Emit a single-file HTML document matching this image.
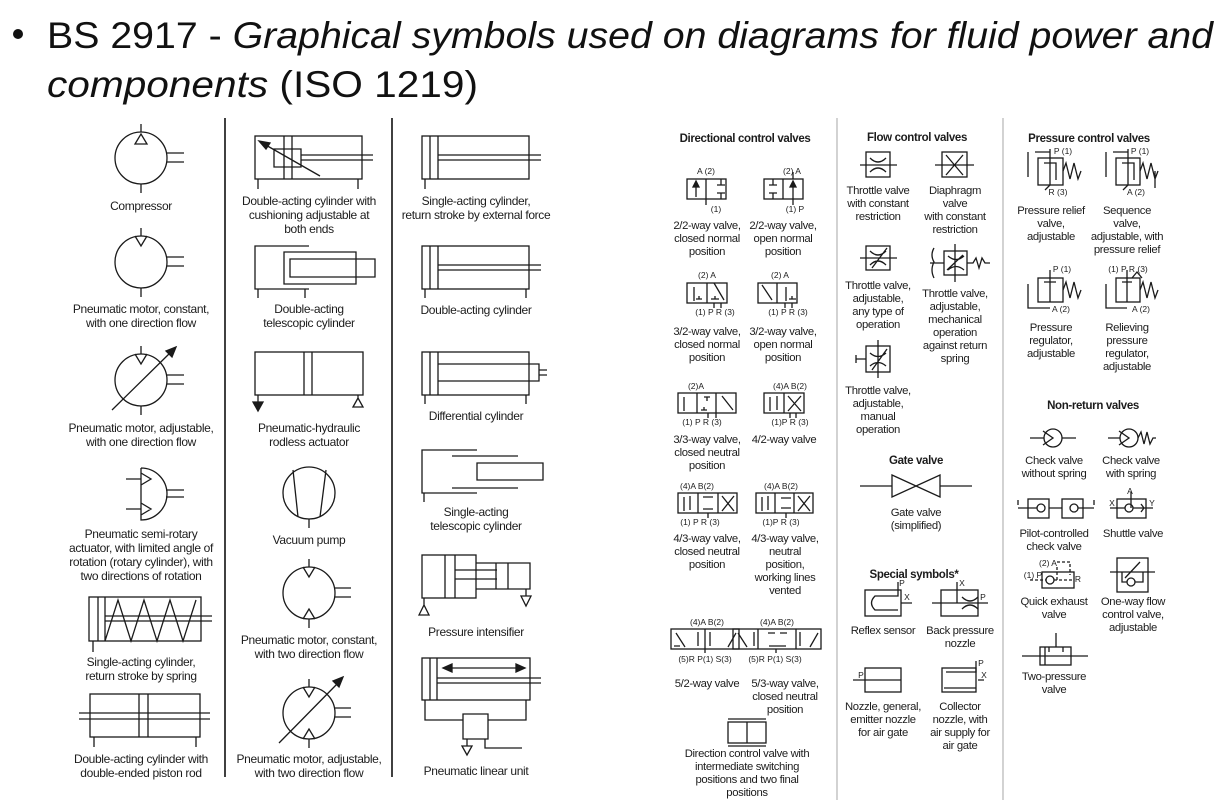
<!DOCTYPE html>
<html><head><meta charset="utf-8"><style>
html,body{margin:0;padding:0;background:#fff;}
svg{display:block}
.t{font-family:"Liberation Sans",Arial,sans-serif;font-size:12px;fill:#1c1c1c;text-anchor:middle;letter-spacing:-0.35px}
.b{font-weight:bold;font-size:11.5px}
.s{font-family:"Liberation Sans",Arial,sans-serif;font-size:8.5px;fill:#1c1c1c;text-anchor:middle}
.ti{font-family:"Liberation Sans",Arial,sans-serif;font-size:37px;fill:#111}
g.k *{fill:none;stroke:#1a1a1a;stroke-width:1.3}
g.k .f{fill:#1a1a1a}
</style></head><body>
<svg width="1227" height="804" viewBox="0 0 1227 804" xmlns="http://www.w3.org/2000/svg">
<circle cx="18" cy="34" r="5" fill="#111"/>
<text class="ti" x="47" y="48" textLength="1166" lengthAdjust="spacingAndGlyphs">BS 2917 - <tspan font-style="italic">Graphical symbols used on diagrams for fluid power and</tspan></text>
<text class="ti" x="47" y="97" textLength="431" lengthAdjust="spacingAndGlyphs"><tspan font-style="italic">components</tspan>  (ISO  1219)</text>

<!-- dividers -->
<line x1="225" y1="118" x2="225" y2="777" stroke="#111" stroke-width="1.6"/>
<line x1="392" y1="118" x2="392" y2="777" stroke="#111" stroke-width="1.6"/>
<line x1="837" y1="118" x2="837" y2="800" stroke="#bbb" stroke-width="1.3"/>
<line x1="1003" y1="118" x2="1003" y2="800" stroke="#bbb" stroke-width="1.3"/>

<g class="k">
<!-- col1 -->
<circle cx="141" cy="158" r="26"/><path d="M141 124V132M141 184V193M167 153H184M167 162H184M135 144L141 134L147 144Z"/>
<circle cx="141" cy="262" r="26"/><path d="M141 228V236M141 288V297M167 257H184M167 266H184M135 236L141 246L147 236"/>
<circle cx="141" cy="380" r="26"/><path d="M141 346V354M141 406V415M167 375H184M167 384H184M135 354L141 364L147 354M112 410L172 351"/><path class="f" d="M176 347L166 351L172 357Z"/>
<path d="M141 468V520A26 26 0 0 0 141 468M126 479H141M126 509H141M141 473L151 479L141 485M141 503L151 509L141 515M166 490H184M166 497H184"/>
<rect x="89" y="597" width="112" height="44"/><path d="M98 597V641M105 597V641M105 616H212M105 621H212M93 641V652M105 641L118 600L131 641L144 600L157 641L170 600L183 641L196 600"/>
<rect x="90" y="694" width="110" height="43"/><path d="M139 694V737M148 694V737M79 713H210M79 719H210M94 737V747M196 737V747"/>
<!-- col2 -->
<rect x="255" y="136" width="107" height="43"/><path d="M284 136V179M292 136V179M274 149H301V167H274ZM301 155H373M301 160H373M258 179V189M358 179V189M320 176L264 144"/><path class="f" d="M259 141L270 143L266 149Z"/>
<path d="M309 246H255V289H309M284 252H356V284H284ZM290 259H375V277H290ZM258 289V298M305 289V298"/>
<rect x="255" y="352" width="108" height="43"/><path d="M304 352V395M312 352V395M258 395V402M358 395V398M353 407L358 398L363 407Z"/><path class="f" d="M253 402H263L258 411Z"/>
<circle cx="309" cy="493" r="26"/><path d="M293 470L298 517M326 470L320 517M309 519V528"/>
<circle cx="309" cy="593" r="26"/><path d="M309 559V567M309 619V628M335 588H351M335 597H351M303 567L309 577L315 567M303 619L309 609L315 619"/>
<circle cx="309" cy="713" r="26"/><path d="M309 679V687M309 739V748M335 708H351M335 717H351M303 687L309 697L315 687M303 739L309 729L315 739M279 743L338 683"/><path class="f" d="M343 677L333 681L339 687Z"/>
<!-- col3 -->
<rect x="422" y="136" width="107" height="43"/><path d="M430 136V179M438 136V179M438 155H541M438 160H541M425 179V189"/>
<rect x="422" y="246" width="107" height="43"/><path d="M430 246V289M438 246V289M438 265H541M438 270H541M425 289V298M526 289V298"/>
<rect x="422" y="352" width="107" height="43"/><path d="M430 352V395M438 352V395M438 364H539V381H438M539 370H547M539 375H547M425 395V404M526 395V404"/>
<path d="M477 450H422V493H477M452 456H518M452 488H518M477 463H543V480H477ZM424 493V502"/>
<rect x="422" y="555" width="54" height="43"/><path d="M445 555V598M455 555V598M455 570H497M455 579H497M476 563H530V589H476M496 563V589M508 563V589M424 598V605M419 615L424 605L429 615ZM526 589V596M521 596H531L526 606Z"/>
<rect x="422" y="658" width="108" height="42"/><path d="M430 658V700M437 658V700M437 678H541M437 683H541M450 668H518M425 700V720H463M526 700V720H488M463 714H488V739H463ZM467 739V746M462 746H472L467 755ZM485 739V748H522"/><path class="f" d="M443 668L452 664V672ZM525 668L516 664V672Z"/>

<!-- directional valves -->
<rect x="687" y="179" width="39" height="20"/><path d="M706 179V199M696 197V183M721 179V185M717 185H725M721 199V193M717 193H725M706 199V205"/><path class="f" d="M696 181L693 187H699Z"/>
<rect x="764" y="179" width="39" height="20"/><path d="M783 179V199M793 199V183M773 179V185M769 185H777M773 199V193M769 193H777M793 199V205M793 179V172"/><path class="f" d="M793 181L790 187H796Z"/>
<rect x="687" y="283" width="40" height="20"/><path d="M707 283V303M694 301V287M714 283L724 300M696 299H702M699 299V296M711 299H719M715 299V296M714 303V308M721 303V308"/>
<rect x="758" y="283" width="39" height="20"/><path d="M777 283V303M762 285L772 300M786 301V287M792 299V296M789 299H796M785 303V308M792 303V308"/>
<rect x="678" y="393" width="58" height="20"/><path d="M697 393V413M716 393V413M684 411V397M704 397H710M707 397V401M701 410H707M704 410V407M722 396L733 410M708 413V418M716 413V418"/>
<rect x="764" y="393" width="40" height="20"/><path d="M784 393V413M770 411V397M777 396V410M788 396L801 411M801 396L788 411M790 413V418M796 413V418"/>
<rect x="678" y="493" width="59" height="20"/><path d="M698 493V513M718 493V513M684 511V497M690 496V510M703 497H713M703 509H713M722 496L734 511M734 496L722 511M708 513V518"/>
<rect x="756" y="493" width="57" height="20"/><path d="M775 493V513M794 493V513M762 511V497M768 496V510M781 498H791M781 508H791M798 496L810 511M810 496L798 511M786 513V518"/>
<rect x="671" y="629" width="68" height="20"/><path d="M705 629V649M676 633L685 647M698 632V646M710 632V646M728 647L736 633M674 646H680M705 649V653"/>
<rect x="733" y="629" width="88" height="20"/><path d="M758 629V649M796 629V649M738 633L747 647M754 632V646M768 633H775M780 633H787M769 646H786M800 632V646M810 647L818 633M776 649V653"/>
<rect x="728" y="722" width="38" height="21"/><path d="M747 722V743M728 719H766M728 746H766"/>

<!-- flow -->
<rect x="866" y="152" width="24" height="25"/><path d="M860 165H897M870 158Q878 166 886 158M870 172Q878 164 886 172"/>
<rect x="942" y="152" width="25" height="25"/><path d="M935 165H974M946 155L963 175M963 155L946 175"/>
<rect x="866" y="246" width="24" height="24"/><path d="M860 258H897M870 251Q878 259 886 251M870 265Q878 257 886 265M872 268L887 248"/>
<rect x="944" y="251" width="23" height="24"/><path d="M930 263H944M955 244V282M967 263H973L976 258L979 268L982 258L985 263H990M947 270L963 255M948 256Q956 263 964 256M948 270Q956 263 964 270M934 248Q930 255 934 262Q930 270 934 278"/>
<rect x="866" y="346" width="24" height="26"/><path d="M878 340V378M856 359H866M856 355V363M870 353Q878 360 886 353M870 366Q878 359 886 366M872 370L887 349"/>
<path d="M860 486H892M940 486H972M892 475L940 497V475L892 497Z"/>
<!-- special -->
<rect x="865" y="590" width="36" height="26"/><path d="M898 582V596H875Q868 603 875 610H898M901 603H912"/>
<rect x="941" y="590" width="37" height="26"/><path d="M957 582V603M932 603H988M962 597Q970 605 978 597M962 609Q970 601 978 609"/>
<rect x="865" y="668" width="36" height="24"/><path d="M853 680H901"/>
<rect x="942" y="668" width="34" height="24"/><path d="M976 661V672H946M944 688H976M978 680H984"/>

<!-- pressure -->
<rect x="1038" y="158" width="25" height="27"/><path d="M1050 149V185M1044 163H1056V180M1035 152H1050M1028 152V177M1050 185L1045 190M1063 171L1066 163L1070 179L1074 163L1078 179L1081 171"/>
<rect x="1116" y="158" width="24" height="27"/><path d="M1128 149V185M1122 163H1134V180M1113 152H1128M1106 152V177M1128 185L1123 190M1140 171L1143 163L1147 179L1151 163L1155 179L1158 171M1155 171V188"/>
<rect x="1038" y="278" width="25" height="24"/><path d="M1050 270V302M1044 282H1056M1050 282V298M1028 284V308H1050M1063 290L1066 282L1070 298L1074 282L1078 298L1081 290"/>
<rect x="1116" y="278" width="24" height="24"/><path d="M1127 270V302M1122 282H1132M1127 282V298M1106 284V308H1127M1140 290L1143 282L1147 298L1151 282L1155 298L1158 290M1132 278L1137 272L1142 278"/>
<!-- non-return -->
<circle cx="1053" cy="438" r="9"/><path d="M1030 438H1044M1062 438H1076M1043 431L1053 438L1043 445"/>
<circle cx="1129" cy="438" r="9"/><path d="M1108 438H1120M1119 431L1129 438L1119 445M1138 438L1141 432L1144 444L1147 432L1150 444L1153 438H1156"/>
<rect x="1028" y="499" width="21" height="19"/><rect x="1062" y="499" width="21" height="19"/><circle cx="1041" cy="508" r="4"/><circle cx="1074" cy="508" r="4"/><path d="M1018 508H1037M1049 508H1062M1078 508H1094M1018 500V505M1094 500V505"/>
<rect x="1117" y="499" width="29" height="19"/><circle cx="1129" cy="508" r="4"/><path d="M1110 508H1125M1133 508H1153M1131 492V508M1141 504L1144 508L1141 512"/>
<rect x="1042" y="572" width="32" height="16"/><circle cx="1050" cy="580" r="4"/><path d="M1030 580H1046M1054 580H1072M1057 567V580M1057 562H1070V575" stroke-dasharray="3 2"/>
<rect x="1117" y="558" width="31" height="34"/><circle cx="1131" cy="582" r="4"/><path d="M1110 572H1155M1122 572V582H1127M1143 572V582H1135M1125 578L1140 562"/>
<rect x="1040" y="647" width="31" height="18"/><path d="M1022 656H1088M1056 633V647M1045 647V665M1049 647V652M1063 647V652"/>
</g>

<!-- left labels -->
<g class="t">
<text x="141" y="210">Compressor</text>
<text x="141" y="313">Pneumatic motor, constant,<tspan x="141" dy="14">with one direction flow</tspan></text>
<text x="141" y="432">Pneumatic motor, adjustable,<tspan x="141" dy="14">with one direction flow</tspan></text>
<text x="141" y="538">Pneumatic semi-rotary<tspan x="141" dy="14">actuator, with limited angle of</tspan><tspan x="141" dy="14">rotation (rotary cylinder), with</tspan><tspan x="141" dy="14">two directions of rotation</tspan></text>
<text x="141" y="666">Single-acting cylinder,<tspan x="141" dy="14">return stroke by spring</tspan></text>
<text x="141" y="763">Double-acting cylinder with<tspan x="141" dy="14">double-ended piston rod</tspan></text>
<text x="309" y="205">Double-acting cylinder with<tspan x="309" dy="14">cushioning adjustable at</tspan><tspan x="309" dy="14">both ends</tspan></text>
<text x="309" y="313">Double-acting<tspan x="309" dy="14">telescopic cylinder</tspan></text>
<text x="309" y="432">Pneumatic-hydraulic<tspan x="309" dy="14">rodless actuator</tspan></text>
<text x="309" y="544">Vacuum pump</text>
<text x="309" y="644">Pneumatic motor, constant,<tspan x="309" dy="14">with two direction flow</tspan></text>
<text x="309" y="763">Pneumatic motor, adjustable,<tspan x="309" dy="14">with two direction flow</tspan></text>
<text x="476" y="205">Single-acting cylinder,<tspan x="476" dy="14">return stroke by external force</tspan></text>
<text x="476" y="314">Double-acting cylinder</text>
<text x="476" y="420">Differential cylinder</text>
<text x="476" y="516">Single-acting<tspan x="476" dy="14">telescopic cylinder</tspan></text>
<text x="476" y="636">Pressure intensifier</text>
<text x="476" y="775">Pneumatic linear unit</text>
</g>

<!-- right labels -->
<g class="t" style="font-size:11.3px">
<text class="b" x="745" y="142">Directional control valves</text>
<text x="707" y="229">2/2-way valve,<tspan x="707" dy="13">closed normal</tspan><tspan x="707" dy="13">position</tspan></text>
<text x="783" y="229">2/2-way valve,<tspan x="783" dy="13">open normal</tspan><tspan x="783" dy="13">position</tspan></text>
<text x="707" y="335">3/2-way valve,<tspan x="707" dy="13">closed normal</tspan><tspan x="707" dy="13">position</tspan></text>
<text x="783" y="335">3/2-way valve,<tspan x="783" dy="13">open normal</tspan><tspan x="783" dy="13">position</tspan></text>
<text x="707" y="443">3/3-way valve,<tspan x="707" dy="13">closed neutral</tspan><tspan x="707" dy="13">position</tspan></text>
<text x="784" y="443">4/2-way valve</text>
<text x="707" y="542">4/3-way valve,<tspan x="707" dy="13">closed neutral</tspan><tspan x="707" dy="13">position</tspan></text>
<text x="785" y="542">4/3-way valve,<tspan x="785" dy="13">neutral</tspan><tspan x="785" dy="13">position,</tspan><tspan x="785" dy="13">working lines</tspan><tspan x="785" dy="13">vented</tspan></text>
<text x="707" y="687">5/2-way valve</text>
<text x="785" y="687">5/3-way valve,<tspan x="785" dy="13">closed neutral</tspan><tspan x="785" dy="13">position</tspan></text>
<text x="747" y="757">Direction control valve with<tspan x="747" dy="13">intermediate switching</tspan><tspan x="747" dy="13">positions and two final</tspan><tspan x="747" dy="13">positions</tspan></text>

<text class="b" x="917" y="141">Flow control valves</text>
<text x="878" y="194">Throttle valve<tspan x="878" dy="13">with constant</tspan><tspan x="878" dy="13">restriction</tspan></text>
<text x="955" y="194">Diaphragm<tspan x="955" dy="13">valve</tspan><tspan x="955" dy="13">with constant</tspan><tspan x="955" dy="13">restriction</tspan></text>
<text x="878" y="289">Throttle valve,<tspan x="878" dy="13">adjustable,</tspan><tspan x="878" dy="13">any type of</tspan><tspan x="878" dy="13">operation</tspan></text>
<text x="955" y="297">Throttle valve,<tspan x="955" dy="13">adjustable,</tspan><tspan x="955" dy="13">mechanical</tspan><tspan x="955" dy="13">operation</tspan><tspan x="955" dy="13">against return</tspan><tspan x="955" dy="13">spring</tspan></text>
<text x="878" y="394">Throttle valve,<tspan x="878" dy="13">adjustable,</tspan><tspan x="878" dy="13">manual</tspan><tspan x="878" dy="13">operation</tspan></text>
<text class="b" x="916" y="464">Gate valve</text>
<text x="916" y="516">Gate valve<tspan x="916" dy="13">(simplified)</tspan></text>
<text class="b" x="914" y="578">Special symbols*</text>
<text x="883" y="634">Reflex sensor</text>
<text x="960" y="634">Back pressure<tspan x="960" dy="13">nozzle</tspan></text>
<text x="883" y="710">Nozzle, general,<tspan x="883" dy="13">emitter nozzle</tspan><tspan x="883" dy="13">for air gate</tspan></text>
<text x="960" y="710">Collector<tspan x="960" dy="13">nozzle, with</tspan><tspan x="960" dy="13">air supply for</tspan><tspan x="960" dy="13">air gate</tspan></text>

<text class="b" x="1089" y="142">Pressure control valves</text>
<text x="1051" y="214">Pressure relief<tspan x="1051" dy="13">valve,</tspan><tspan x="1051" dy="13">adjustable</tspan></text>
<text x="1127" y="214">Sequence<tspan x="1127" dy="13">valve,</tspan><tspan x="1127" dy="13">adjustable, with</tspan><tspan x="1127" dy="13">pressure relief</tspan></text>
<text x="1051" y="331">Pressure<tspan x="1051" dy="13">regulator,</tspan><tspan x="1051" dy="13">adjustable</tspan></text>
<text x="1127" y="331">Relieving<tspan x="1127" dy="13">pressure</tspan><tspan x="1127" dy="13">regulator,</tspan><tspan x="1127" dy="13">adjustable</tspan></text>
<text class="b" x="1093" y="409">Non-return valves</text>
<text x="1054" y="464">Check valve<tspan x="1054" dy="13">without spring</tspan></text>
<text x="1131" y="464">Check valve<tspan x="1131" dy="13">with spring</tspan></text>
<text x="1054" y="537">Pilot-controlled<tspan x="1054" dy="13">check valve</tspan></text>
<text x="1133" y="537">Shuttle valve</text>
<text x="1054" y="605">Quick exhaust<tspan x="1054" dy="13">valve</tspan></text>
<text x="1133" y="605">One-way flow<tspan x="1133" dy="13">control valve,</tspan><tspan x="1133" dy="13">adjustable</tspan></text>
<text x="1054" y="680">Two-pressure<tspan x="1054" dy="13">valve</tspan></text>
</g>

<!-- tiny port labels -->
<g class="s">
<text x="706" y="174">A (2)</text><text x="716" y="212">(1)</text>
<text x="792" y="174">(2) A</text><text x="795" y="212">(1) P</text>
<text x="707" y="278">(2) A</text><text x="715" y="315">(1) P R (3)</text>
<text x="780" y="278">(2) A</text><text x="788" y="315">(1) P R (3)</text>
<text x="696" y="389">(2)A</text><text x="702" y="425">(1) P R (3)</text>
<text x="790" y="389">(4)A B(2)</text><text x="790" y="425">(1)P R (3)</text>
<text x="697" y="489">(4)A  B(2)</text><text x="700" y="525">(1) P R (3)</text>
<text x="781" y="489">(4)A B(2)</text><text x="781" y="525">(1)P R (3)</text>
<text x="707" y="625">(4)A   B(2)</text><text x="705" y="662">(5)R  P(1) S(3)</text>
<text x="777" y="625">(4)A    B(2)</text><text x="775" y="662">(5)R  P(1) S(3)</text>
<text x="1063" y="154">P (1)</text><text x="1058" y="195">R (3)</text>
<text x="1140" y="154">P (1)</text><text x="1136" y="195">A (2)</text>
<text x="1062" y="272">P (1)</text><text x="1061" y="312">A (2)</text>
<text x="1128" y="272">(1) P R (3)</text><text x="1141" y="312">A (2)</text>
<text x="1130" y="494">A</text><text x="1112" y="506">X</text><text x="1152" y="506">Y</text>
<text x="1048" y="566">(2) A</text><text x="1033" y="578">(1) P</text><text x="1078" y="582">R</text>
<text x="902" y="586">P</text><text x="907" y="600">X</text>
<text x="962" y="586">X</text><text x="983" y="600">P</text>
<text x="861" y="678">P</text><text x="981" y="666">P</text><text x="984" y="678">X</text>
</g>
</svg>
</body></html>
